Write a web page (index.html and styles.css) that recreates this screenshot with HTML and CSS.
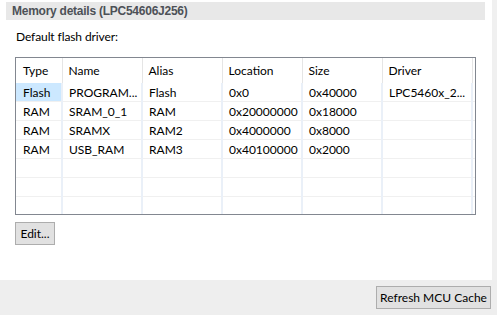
FILE: index.html
```html
<!DOCTYPE html>
<html>
  <head>
    <meta charset="UTF-8" />
    <meta name="viewport" content="width=device-width, initial-scale=1.0" />
    <title>Memory details</title>
    <link rel="stylesheet" href="styles.css">
  </head>
  <body>
    <div class="main">
      <div class="content">
        <div class="section-title">Memory details (LPC54606J256)</div>
        <div class="driver-label">Default flash driver:</div>
        <div class="table-box">
          <table class="memory-table">
            <colgroup>
              <col class="col-type" />
              <col class="col-std" />
              <col class="col-std" />
              <col class="col-std" />
              <col class="col-std" />
              <col class="col-driver" />
              <col class="col-fill" />
            </colgroup>
            <thead>
              <tr>
                <th>Type</th>
                <th>Name</th>
                <th>Alias</th>
                <th>Location</th>
                <th>Size</th>
                <th>Driver</th>
                <th></th>
              </tr>
            </thead>
            <tbody>
              <tr>
                <td class="selected">Flash</td>
                <td>PROGRAM...</td>
                <td>Flash</td>
                <td>0x0</td>
                <td>0x40000</td>
                <td>LPC5460x_2...</td>
                <td></td>
              </tr>
              <tr>
                <td>RAM</td>
                <td>SRAM_0_1</td>
                <td>RAM</td>
                <td>0x20000000</td>
                <td>0x18000</td>
                <td></td>
                <td></td>
              </tr>
              <tr>
                <td>RAM</td>
                <td>SRAMX</td>
                <td>RAM2</td>
                <td>0x4000000</td>
                <td>0x8000</td>
                <td></td>
                <td></td>
              </tr>
              <tr>
                <td>RAM</td>
                <td>USB_RAM</td>
                <td>RAM3</td>
                <td>0x40100000</td>
                <td>0x2000</td>
                <td></td>
                <td></td>
              </tr>
              <tr>
                <td></td><td></td><td></td><td></td><td></td><td></td><td></td>
              </tr>
              <tr>
                <td></td><td></td><td></td><td></td><td></td><td></td><td></td>
              </tr>
              <tr class="last-row">
                <td></td><td></td><td></td><td></td><td></td><td></td><td></td>
              </tr>
            </tbody>
          </table>
        </div>
        <button class="btn edit-btn">Edit...</button>
      </div>
      <div class="side-strip"></div>
    </div>
    <div class="footer">
      <button class="btn">Refresh MCU Cache</button>
    </div>
  </body>
</html>
```

FILE: styles.css
```css
body {
  margin: 0;
  width: 497px;
  height: 315px;
  overflow: hidden;
  font-family: "Segoe UI", Lato, sans-serif;
  font-size: 12px;
  color: #000;
  display: flex;
  flex-direction: column;
}
.main {
  display: flex;
  height: 280px;
}
.content {
  width: 479px;
  padding: 2px 7px 0 6px;
  background-color: #fff;
}
.side-strip {
  flex: 1;
  background-color: #f0f0f0;
}
.section-title {
  height: 18px;
  line-height: 18px;
  padding-left: 6px;
  background-color: #e8e8e8;
  color: #4d5157;
  font-family: "Liberation Sans", Arial, sans-serif;
  font-weight: bold;
  font-size: 12px;
  letter-spacing: -0.25px;
}
.driver-label {
  padding-left: 10px;
  margin-top: 9px;
  line-height: 16px;
  letter-spacing: -0.1px;
}
.table-box {
  margin: 12px 0 0 9px;
  width: 459px;
  height: 156px;
  border: 1px solid #828790;
  overflow: hidden;
}
.memory-table {
  border-collapse: collapse;
  table-layout: fixed;
  width: 459px;
}
.col-type {
  width: 46px;
}
.col-std {
  width: 80px;
}
.col-driver {
  width: 90px;
}
.col-fill {
  width: 3px;
}
th,
td {
  padding: 0 0 0 6px;
  text-align: left;
  white-space: nowrap;
  overflow: hidden;
  font-weight: normal;
}
th {
  height: 25px;
  border-right: 1px solid #e5e5e5;
}
td {
  height: 18px;
  border-bottom: 1px solid #f0f0f0;
  border-right: 2px solid #eaf0f8;
}
td:first-child,
th:first-child {
  padding-left: 7px;
}
td:last-child,
th:last-child {
  border-right: none;
}
.last-row td {
  height: 17px;
  border-bottom: none;
}
.selected {
  background-color: #cce8ff;
}
.btn {
  font-family: inherit;
  font-size: 12px;
  color: #000;
  background-color: #e1e1e1;
  border: 1px solid #adadad;
  height: 23px;
  padding: 0 3px;
  border-radius: 0;
  white-space: nowrap;
}
.edit-btn {
  margin: 7px 0 0 9px;
  width: 40px;
  padding: 0;
}
.footer {
  flex: 1;
  background-color: #eeeeee;
  display: flex;
  justify-content: flex-end;
  align-items: flex-start;
  padding: 6px 6px 0 0;
}
.footer .btn {
  width: 115px;
}
```
